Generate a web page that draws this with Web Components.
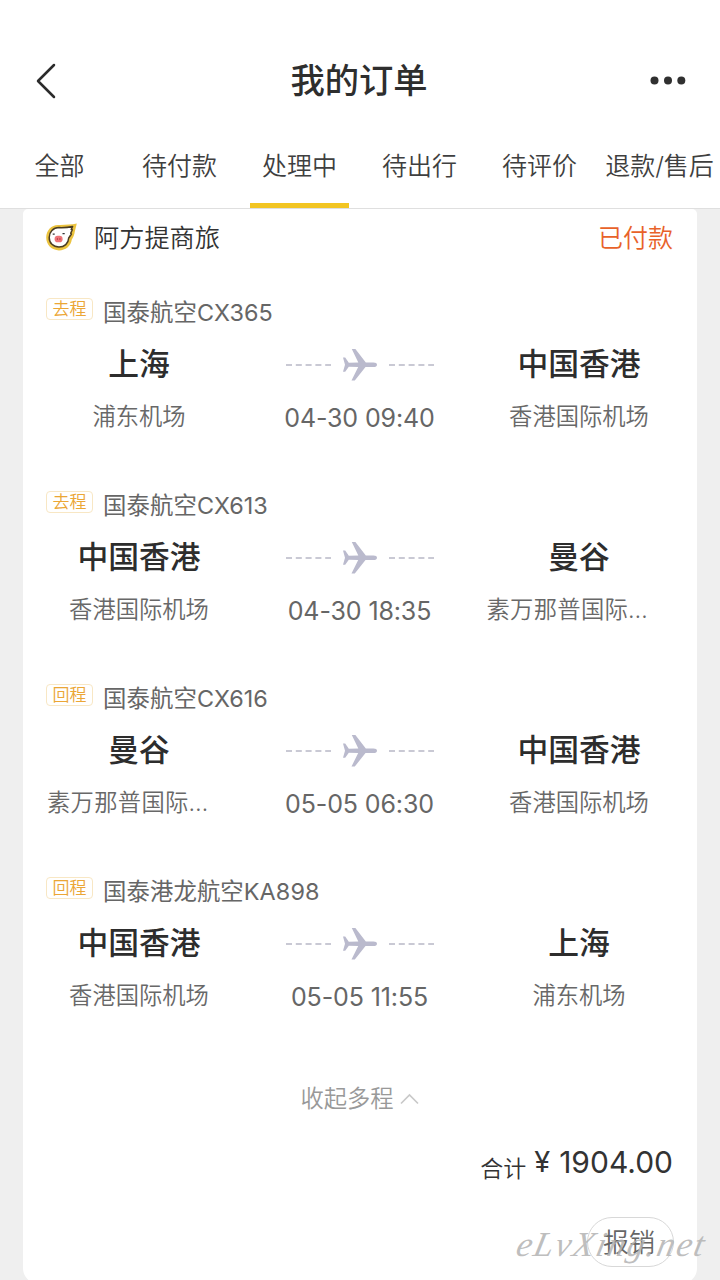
<!DOCTYPE html>
<html lang="zh-CN">
<head>
<meta charset="utf-8">
<title>我的订单</title>
<style>
  html, body { margin: 0; height: 1280px; overflow: hidden; background: #efefef; }
  body { font-family: Inter, "Noto Sans CJK SC", sans-serif; font-weight: 350; color: #333; }
</style>
</head>
<body>
<orders-page></orders-page>
<script>
const define = (name, html, setup) => customElements.define(name, class extends HTMLElement {
  connectedCallback() {
    if (this.shadowRoot) return;
    const t = document.createElement('template');
    t.innerHTML = html;
    this.attachShadow({ mode: 'open' }).append(t.content.cloneNode(true));
    if (setup) setup(this, this.shadowRoot);
  }
});

define('nav-bar', `
<style>
  :host { display: grid; grid-template-columns: 100px 1fr 100px; align-items: center; height: 88px; padding-top: 36px; background: #fff; }
  .title { text-align: center; font-size: 34.3px; font-weight: 500; line-height: 50px; padding: 2px 2px 0 0; color: #2e2e2e; }
  svg { display: block; }
  .more { justify-self: end; }
</style>
<svg width="100" height="50" viewBox="0 0 100 50"><path d="M54 10 L38 26 L54 42" fill="none" stroke="#2b2b2b" stroke-width="2.5" stroke-linecap="round" stroke-linejoin="round"/></svg>
<div class="title"><slot></slot></div>
<svg class="more" width="100" height="50" viewBox="0 0 100 50" fill="#303030"><circle cx="34.5" cy="25.5" r="4"/><circle cx="48" cy="25.5" r="4"/><circle cx="61.3" cy="25.5" r="4"/></svg>`);

define('tab-item', `
<style>
  :host { display: flex; justify-content: center; align-items: flex-start; flex: 0 0 120px; height: 84px; box-sizing: border-box; padding: 24px 1px 0 0; font-size: 25px; line-height: 36px; white-space: nowrap; color: #3f3f3f; position: relative; }
  :host([active])::after { content: ""; position: absolute; left: 9.5px; right: 11px; bottom: 0; height: 5px; background: #f2c522; }
</style>
<slot></slot>`);

define('tab-bar', `
<style>:host { display: flex; background: #fff; border-bottom: 1px solid #dfdfdf; }</style>
<slot></slot>`);

define('brand-icon', `
<style>:host { display: block; width: 32px; height: 30px; } svg { display: block; }</style>
<svg width="32" height="30" viewBox="0 0 32 30">
  <path d="M12 2 C19 2.1 25 1.8 30.8 .6 L28.8 8.4 C28.4 11.5 27.4 13.8 25.8 16.5 C25 23 19.5 27.4 13 27.4 C5.8 27.4 .2 22 .2 14.6 C.2 7.3 5.5 2 12 2 Z" fill="#ebc33f"/>
  <path d="M13 4.6 C18 4.8 22 4.5 26.6 3.5 L25.2 6.6 L26.3 6.7 L24.7 10.3 L25.4 11 L22.7 15 C22.4 20.6 18.4 24 13 24 C7.2 24 3.2 20 3.2 14.4 C3.2 8.9 7.1 4.6 13 4.6 Z" fill="#fff" stroke="#4a3c22" stroke-width="1.5" stroke-linejoin="round"/>
  <rect x="8.6" y="12.7" width="8" height="6.6" rx="3.1" fill="#ee7377"/>
  <path d="M11.4 15v2M13.9 15v2" stroke="#b9434b" stroke-width="1"/>
  <path d="M6.7 11.2h2M16.5 10.7h2.2" stroke="#333" stroke-width="1.3"/>
</svg>`);

define('order-head', `
<style>
  :host { display: flex; align-items: center; height: 56px; font-size: 25.2px; line-height: 36px; }
  brand-icon { margin: 1px 16px 0 0; }
  .name { padding-top: 1px; }
  .status { margin: 0 1px 0 auto; padding-top: 1px; color: #e8622a; font-size: 25px; }
</style>
<brand-icon></brand-icon><span class="name"><slot></slot></span><span class="status"><slot name="status"></slot></span>`);

define('trip-tag', `
<style>:host { display: block; box-sizing: border-box; width: 47px; height: 22px; border: 1px solid #f8e7c4; border-radius: 4px; text-align: center; font-size: 17px; line-height: 20px; color: #eba635; }</style>
<slot></slot>`);

define('flight-arrow', `
<style>:host { display: block; } svg { display: block; }</style>
<svg width="150" height="34" viewBox="0 0 150 34">
  <path d="M1 17H46M104 17H149" stroke="#c9c9d4" stroke-width="2" stroke-dasharray="6 3.8"/>
  <path d="M58 9.5 H60.2 L63.8 14.8 L73.3 14.5 L66.8 1 H70.4 L80.8 14.5 H88.5 C90.6 14.5 92 15.4 92 16.8 C92 18.2 90.6 19.1 88.5 19.1 H80.5 L69.8 32.5 H66.5 L73.2 19.1 L63.8 18.7 L60.2 23.8 H58 L60 16.8 Z" fill="#babacd"/>
</svg>`);

define('flight-leg', `
<style>
  :host { display: block; height: 193px; }
  .top { display: flex; gap: 10px; height: 48px; font-size: 23.4px; line-height: 34px; color: #666; }
  .top trip-tag { margin-top: 5px; }
  .top .no { margin-top: 3px; font-weight: 400; letter-spacing: .08px; }
  .grid { display: grid; grid-template-columns: 186px 1fr 187px; }
  .stop { text-align: center; }
  .stop:last-child { position: relative; left: -1.5px; }
  .city { padding-top: 1px; font-size: 30.8px; line-height: 44px; font-weight: 500; color: #2d2d2d; }
  .port { margin-top: 14px; font-size: 23.3px; line-height: 34px; color: #686868; white-space: nowrap; }
  .port.cut { text-align: left; letter-spacing: .3px; padding-left: 1px; }
  .mid { display: flex; flex-direction: column; align-items: center; }
  flight-arrow { margin-top: 7px; }
  .time { margin-top: 19px; font-size: 25px; line-height: 34px; font-weight: 400; letter-spacing: -0.12px; color: #666; white-space: nowrap; }
</style>
<div class="top"><trip-tag></trip-tag><span class="no"></span></div>
<div class="grid">
  <div class="stop"><div class="city" id="fc"></div><div class="port" id="fp"></div></div>
  <div class="mid"><flight-arrow></flight-arrow><div class="time"></div></div>
  <div class="stop"><div class="city" id="tc"></div><div class="port" id="tp"></div></div>
</div>`, (el, r) => {
  const put = (sel, attr) => {
    const n = r.querySelector(sel);
    n.textContent = el.getAttribute(attr);
    if (n.textContent.endsWith('…')) n.classList.add('cut');
  };
  put('trip-tag', 'tag'); put('.no', 'flight');
  put('#fc', 'from'); put('#fp', 'from-port');
  put('#tc', 'to'); put('#tp', 'to-port');
  put('.time', 'time');
});

define('collapse-link', `
<style>
  :host { display: flex; justify-content: center; align-items: center; gap: 6px; height: 34px; padding-right: 1px; font-size: 23.3px; line-height: 34px; color: #999; }
  span { padding-top: 1px; }
  svg { margin-top: 2px; }
</style>
<span><slot></slot></span><svg width="19" height="12" viewBox="0 0 19 12"><path d="M1 10.5 L9.5 2 L18 10.5" fill="none" stroke="#c9c9c9" stroke-width="1.7"/></svg>`);

define('order-total', `
<style>
  :host { display: flex; justify-content: flex-end; height: 44px; color: #333; font-weight: 400; }
  .label { font-size: 23px; line-height: 34px; margin: 12px 8px 0 0; font-weight: 350; }
  .yen { font-size: 29px; line-height: 44px; width: 25px; }
  .sum { font-size: 30px; line-height: 44px; }
</style>
<span class="label">合计</span><span class="yen">¥</span><span class="sum"><slot></slot></span>`);

define('pill-button', `
<style>
  :host { display: block; box-sizing: border-box; width: 87px; height: 50px; border: 1px solid #d8d8d8; border-radius: 25px; padding-right: 3px; text-align: center; font-size: 26px; line-height: 49px; color: #666; }
</style>
<slot></slot>`);

define('order-card', `
<style>
  :host { display: block; box-sizing: border-box; margin: 0 23px; height: 1075px; padding: 0 23px; background: #fff; border-radius: 5px 5px 16px 16px; }
  .legs { padding-top: 28px; }
  .more { margin-top: 16px; }
  .total { margin: 25px 1px 0 0; }
  .foot { display: flex; justify-content: flex-end; margin-top: 33px; }
</style>
<order-head>阿方提商旅<span slot="status">已付款</span></order-head>
<div class="legs"><slot></slot></div>
<collapse-link class="more">收起多程</collapse-link>
<order-total class="total">1904.00</order-total>
<div class="foot"><pill-button>报销</pill-button></div>`);

define('water-mark', `
<style>
  :host { position: absolute; left: 517px; top: 1220px; font: italic 35px/50px "Liberation Serif", serif; letter-spacing: 1.9px; color: rgba(178,178,178,.85); white-space: nowrap; transform: skewX(-12deg); pointer-events: none; }
</style>
<slot></slot>`);

define('orders-page', `
<style>:host { display: block; width: 720px; height: 1280px; overflow: hidden; position: relative; }</style>
<nav-bar>我的订单</nav-bar>
<tab-bar>
  <tab-item>全部</tab-item><tab-item>待付款</tab-item><tab-item active>处理中</tab-item>
  <tab-item>待出行</tab-item><tab-item>待评价</tab-item><tab-item>退款/售后</tab-item>
</tab-bar>
<order-card>
  <flight-leg tag="去程" flight="国泰航空CX365" from="上海" from-port="浦东机场" to="中国香港" to-port="香港国际机场" time="04-30 09:40"></flight-leg>
  <flight-leg tag="去程" flight="国泰航空CX613" from="中国香港" from-port="香港国际机场" to="曼谷" to-port="素万那普国际…" time="04-30 18:35"></flight-leg>
  <flight-leg tag="回程" flight="国泰航空CX616" from="曼谷" from-port="素万那普国际…" to="中国香港" to-port="香港国际机场" time="05-05 06:30"></flight-leg>
  <flight-leg tag="回程" flight="国泰港龙航空KA898" from="中国香港" from-port="香港国际机场" to="上海" to-port="浦东机场" time="05-05 11:55"></flight-leg>
</order-card>
<water-mark>eLvXing.net</water-mark>`);
</script>
</body>
</html>
